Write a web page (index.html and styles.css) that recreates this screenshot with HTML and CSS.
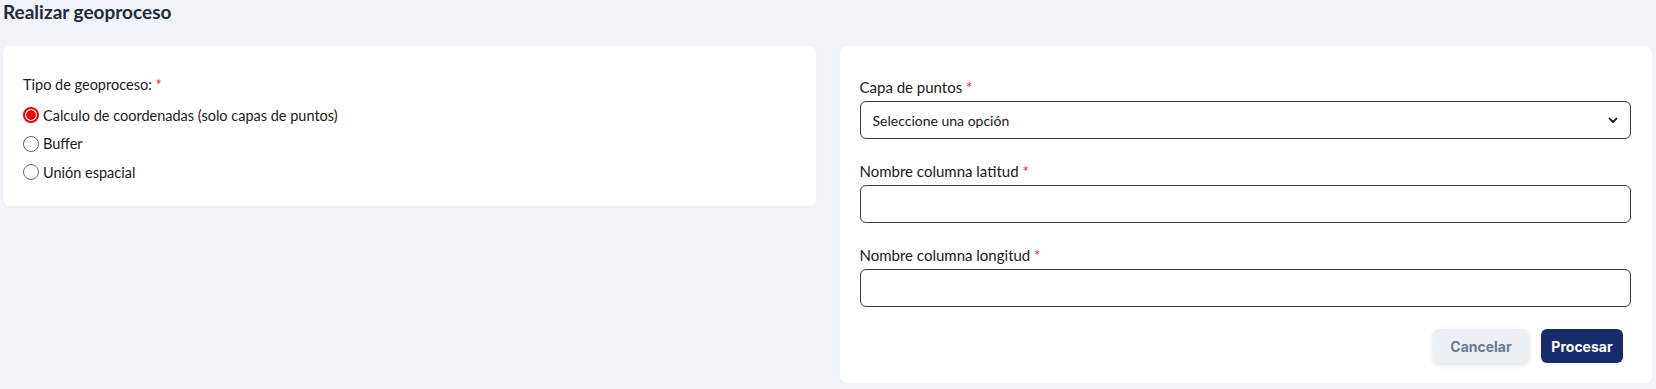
FILE: index.html
```html
<!DOCTYPE html>
<html lang="es">
<head>
  <meta charset="UTF-8" />
  <title>Realizar geoproceso</title>
  <link rel="stylesheet" href="styles.css">
</head>
<body>

<div class="page">
  <h2 class="page-title">Realizar geoproceso</h2>

  <div class="columns">
    <div class="card card-left">
      <label class="field-label">Tipo de geoproceso: <span class="req">*</span></label>
      <div class="radio-list">
        <label class="radio-row">
          <input type="radio" name="tipo" checked>
          <span>Calculo de coordenadas (solo capas de puntos)</span>
        </label>
        <label class="radio-row">
          <input type="radio" name="tipo">
          <span>Buffer</span>
        </label>
        <label class="radio-row">
          <input type="radio" name="tipo">
          <span>Unión espacial</span>
        </label>
      </div>
    </div>

    <div class="card card-right">
      <div class="field">
        <label class="field-label">Capa de puntos <span class="req">*</span></label>
        <div class="select-box">
          <span>Seleccione una opción</span>
          <svg width="10" height="7" viewBox="0 0 10 7"><path d="M1.5 1.5 L5 5 L8.5 1.5" fill="none" stroke="#222" stroke-width="1.8" stroke-linecap="round" stroke-linejoin="round"/></svg>
        </div>
      </div>

      <div class="field">
        <label class="field-label">Nombre columna latitud <span class="req">*</span></label>
        <input type="text" class="text-input">
      </div>

      <div class="field">
        <label class="field-label">Nombre columna longitud <span class="req">*</span></label>
        <input type="text" class="text-input">
      </div>

      <div class="actions">
        <button class="btn btn-cancel">Cancelar</button>
        <button class="btn btn-primary">Procesar</button>
      </div>
    </div>
  </div>
</div>

</body>
</html>
```

FILE: styles.css
```css
body {
  margin: 0;
  padding: 0;
  background: #f0f3f7;
  font-family: 'Lato', 'Noto Sans', sans-serif;
  color: #1a1a1a;
}

.page {
  padding: 0 4px 0 3px;
}

.page-title {
  margin: 0;
  padding-top: 1px;
  height: 45px;
  font-size: 19px;
  font-weight: 700;
  color: #222b38;
  line-height: 22px;
}

.columns {
  display: grid;
  grid-template-columns: 1fr 1fr;
  gap: 24px;
  align-items: start;
}

.card {
  background: #fff;
  border-radius: 7px;
  box-shadow: 0 1px 2px rgba(0, 0, 0, 0.03);
}

.card-left {
  padding: 29px 20px 19px 20px;
}

.card-right {
  padding: 31px 21px 20px 20px;
}

.field-label {
  display: block;
  font-size: 15px;
  line-height: 20px;
  color: #1a1a1a;
}

.card-left .field-label {
  font-size: 14.5px;
}

.req {
  color: #d92d2d;
}

.radio-list {
  margin-top: 6px;
}

.radio-row {
  display: flex;
  align-items: center;
  height: 28.5px;
  font-size: 14.5px;
  gap: 4px;
}

.radio-row input {
  appearance: none;
  -webkit-appearance: none;
  width: 16px;
  height: 16px;
  margin: 0;
  border: 1.5px solid #6b6b6b;
  border-radius: 50%;
  background: #fff;
  box-sizing: border-box;
}

.radio-row input:checked {
  border: 2px solid #f00000;
  background: radial-gradient(circle, #f00000 0 4.5px, #fff 5px);
}

.field {
  margin-bottom: 22px;
}

.field .field-label {
  margin-bottom: 4px;
}

.select-box {
  display: flex;
  align-items: center;
  justify-content: space-between;
  height: 38px;
  box-sizing: border-box;
  border: 1px solid #3a3a3a;
  border-radius: 6px;
  padding: 0 12px 0 12px;
  font-size: 14px;
}

.text-input {
  display: block;
  width: 100%;
  height: 38px;
  box-sizing: border-box;
  border: 1px solid #3a3a3a;
  border-radius: 6px;
  margin: 1px 0 0 0;
  font-size: 15px;
}

.actions {
  display: flex;
  justify-content: flex-end;
  gap: 12px;
  padding-right: 8px;
}

.btn {
  height: 34px;
  border: none;
  border-radius: 6px;
  font-family: 'Inter', sans-serif;
  font-size: 14px;
  font-weight: 700;
  cursor: pointer;
}

.btn-cancel {
  width: 96px;
  background: #edf1f6;
  color: #6b7a90;
  box-shadow: 0 2px 5px rgba(0, 0, 0, 0.12);
}

.btn-primary {
  width: 82px;
  background: #172b6d;
  color: #fff;
}
```
